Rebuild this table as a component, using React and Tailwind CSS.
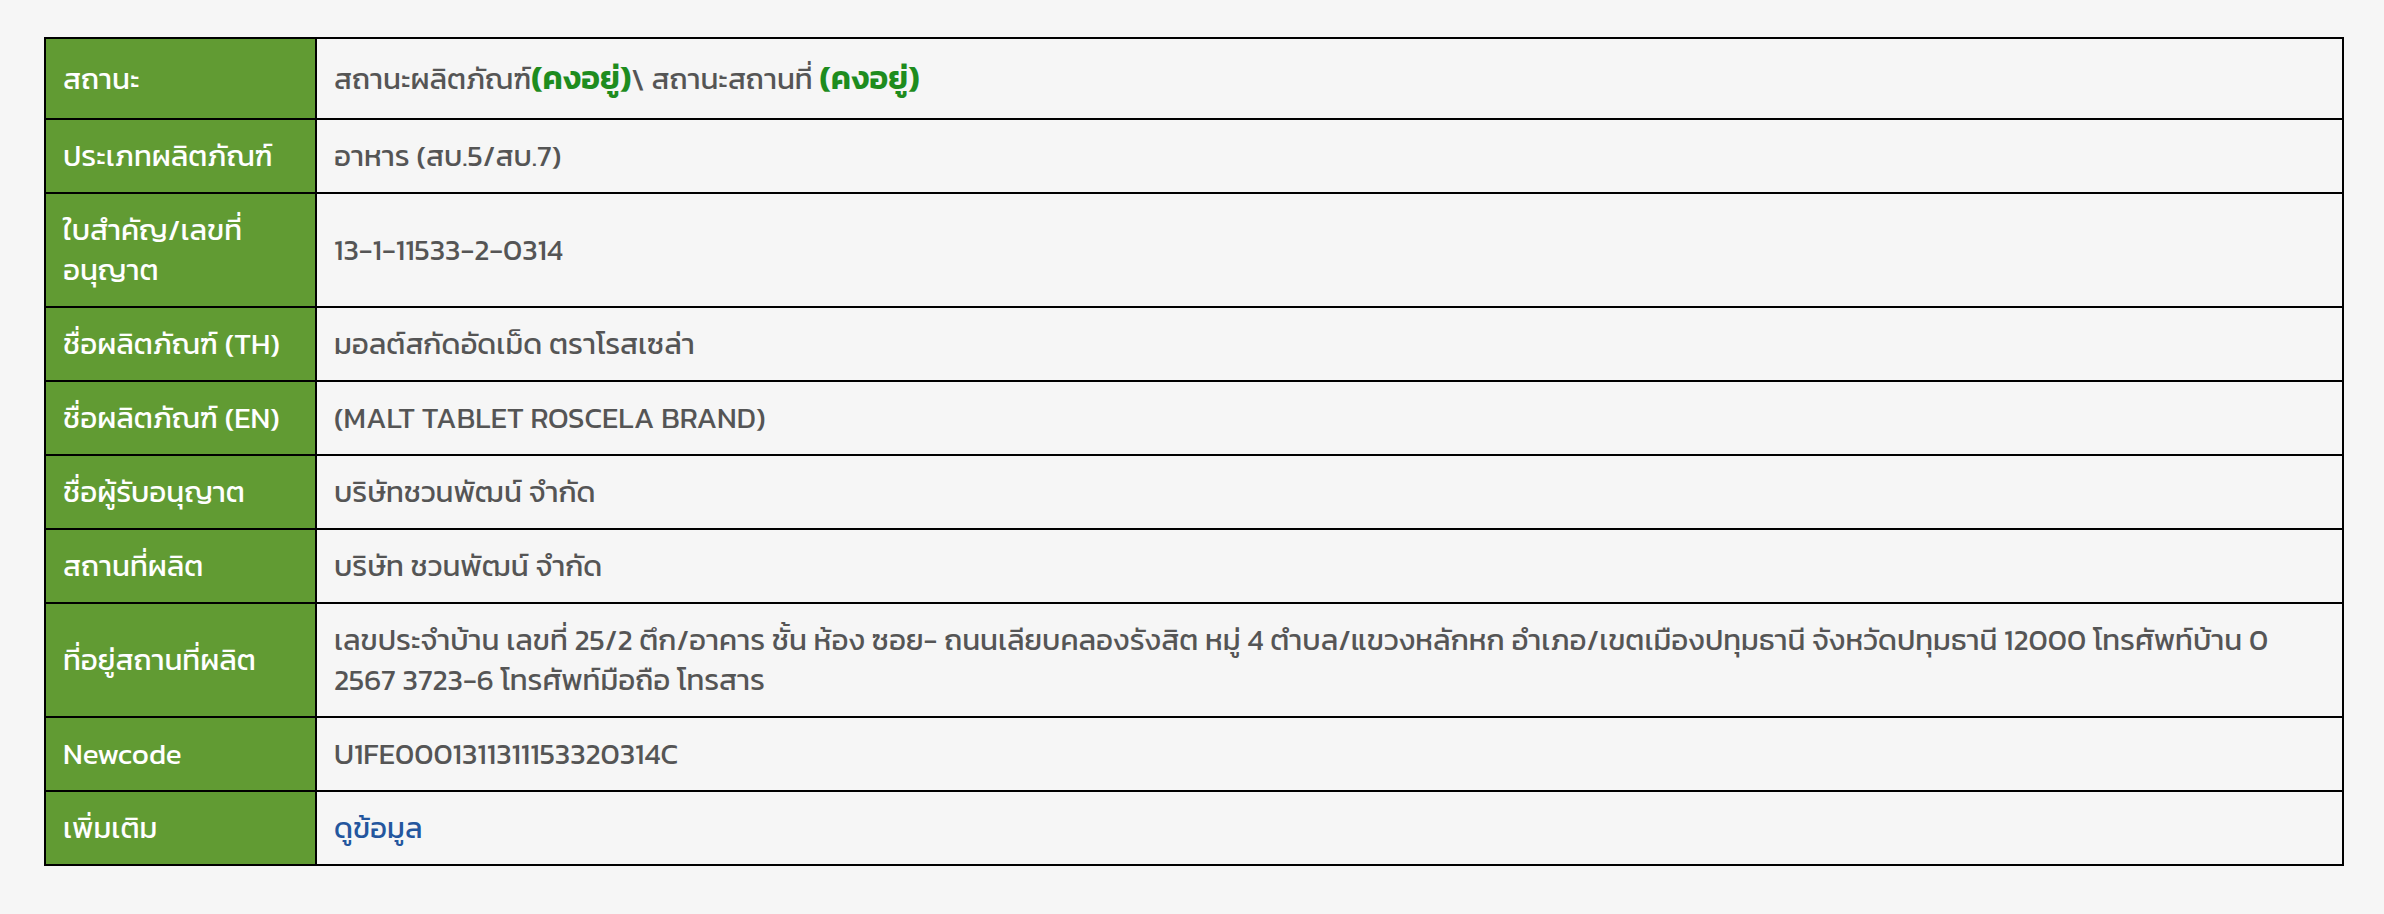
import React from 'react';

const rows = [
  { label: 'ประเภทผลิตภัณฑ์', value: 'อาหาร (สบ.5/สบ.7)' },
  { label: 'ใบสำคัญ/เลขที่ อนุญาต', value: '13-1-11533-2-0314' },
  { label: 'ชื่อผลิตภัณฑ์ (TH)', value: 'มอลต์สกัดอัดเม็ด ตราโรสเซล่า' },
  { label: 'ชื่อผลิตภัณฑ์ (EN)', value: '(MALT TABLET ROSCELA BRAND)' },
  { label: 'ชื่อผู้รับอนุญาต', value: 'บริษัทชวนพัฒน์ จำกัด' },
  { label: 'สถานที่ผลิต', value: 'บริษัท ชวนพัฒน์ จำกัด' },
  {
    label: 'ที่อยู่สถานที่ผลิต',
    value:
      'เลขประจำบ้าน เลขที่ 25/2 ตึก/อาคาร ชั้น ห้อง ซอย- ถนนเลียบคลองรังสิต หมู่ 4 ตำบล/แขวงหลักหก อำเภอ/เขตเมืองปทุมธานี จังหวัดปทุมธานี 12000 โทรศัพท์บ้าน 0 2567 3723-6 โทรศัพท์มือถือ โทรสาร',
  },
  { label: 'Newcode', value: 'U1FE0001311311153320314C' },
];

const labelCls = 'w-[271px] border-2 border-black bg-[#619b33] px-[17px] py-[16px] align-middle text-left font-normal text-white';
const valueCls = 'border-2 border-black bg-[#f6f6f6] px-[17px] py-[16px] align-middle text-[#555555]';

export default function App() {
  return (
    <div
      className="min-h-screen bg-[#f6f6f6] pl-[44px] pr-[40px] pt-[37px] text-[29.5px] leading-[40px]"
      style={{ fontFamily: '"Kanit", "Noto Sans Thai", "Noto Sans", "Liberation Sans", sans-serif' }}
    >
      <table className="w-full border-collapse border-2 border-black">
        <tbody>
          <tr>
            <th className={`${labelCls} py-[19px]`}>สถานะ</th>
            <td className={`${valueCls} py-[19px]`}>
              สถานะผลิตภัณฑ์<span className="text-[32px] font-semibold text-[#1e8c1e]">(คงอยู่)</span>\ สถานะสถานที่{' '}
              <span className="text-[32px] font-semibold text-[#1e8c1e]">(คงอยู่)</span>
            </td>
          </tr>
          {rows.map((r) => (
            <tr key={r.label}>
              <th className={labelCls}>{r.label}</th>
              <td className={valueCls}>{r.value}</td>
            </tr>
          ))}
          <tr>
            <th className={labelCls}>เพิ่มเติม</th>
            <td className={valueCls}>
              <a href="#" className="text-[#24569e]">ดูข้อมูล</a>
            </td>
          </tr>
        </tbody>
      </table>
    </div>
  );
}
